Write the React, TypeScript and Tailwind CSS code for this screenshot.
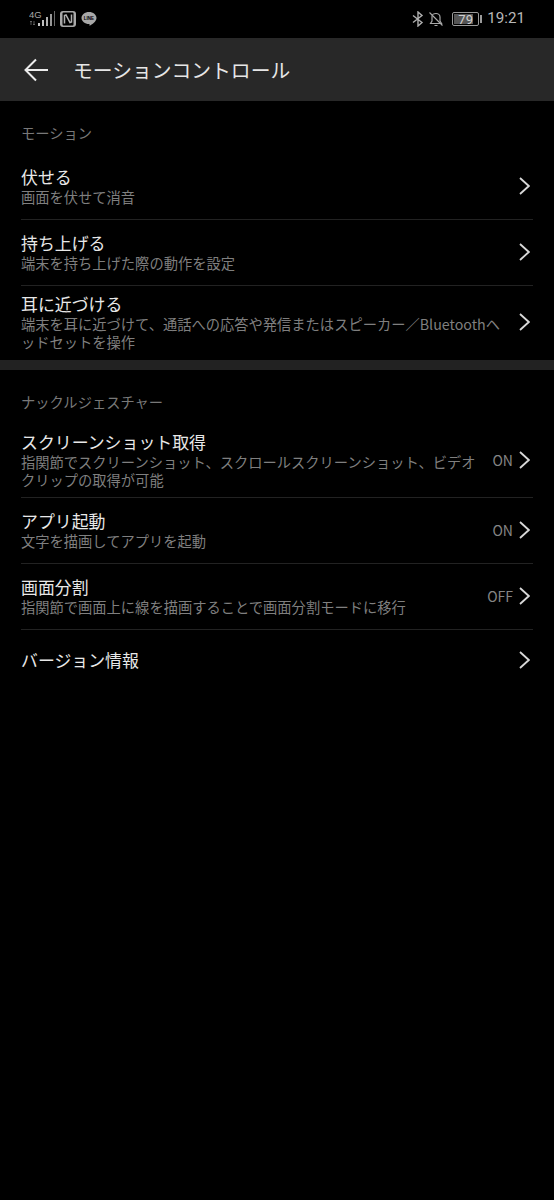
import React from 'react';

const font = '[font-family:"Noto_Sans_CJK_JP","Noto_Sans",sans-serif]';

const Chevron = () => (
  <svg width="12" height="20" viewBox="0 0 12 20" fill="none" className="shrink-0">
    <path d="M2 2l8.800 8L2 18" stroke="#d8d8d8" strokeWidth="1.800" />
  </svg>
);

interface RowProps {
  title: string;
  sub?: string;
  value?: string;
  heightClass: string;
  divider?: boolean;
}

const Row: React.FC<RowProps> = ({ title, sub, value, heightClass, divider = true }) => (
  <div className={`flex items-center pb-[2px] pr-[3px] ${heightClass} ${divider ? 'border-b border-[#222222]' : ''}`}>
    <div className="min-w-0 flex-1">
      <div className="text-[16.9px] leading-[22px] text-[#e8e8e8]">{title}</div>
      {sub && <div className="text-[14.27px] leading-[18px] text-[#7f7f7f] [line-break:loose]">{sub}</div>}
    </div>
    {value && <span className="ml-3 pt-[2px] text-[14px] text-[#858585]">{value}</span>}
    <div className={value ? 'ml-[5px]' : 'ml-[7px]'}><Chevron /></div>
  </div>
);

export default function App() {
  return (
    <div className={`h-[1200px] w-[554px] bg-black ${font}`}>
      {/* status bar */}
      <div className="flex h-[38px] items-center justify-between pl-[29px] pr-[29px] text-[#b0b0b0]">
        <div className="flex items-center gap-[5px]">
          <svg width="26" height="18" viewBox="0 0 26 18">
            <text x="0" y="8" fontSize="9.500" fill="#a8a8a8" fontFamily="Liberation Sans">4G</text>
            <path d="M2 11v4M1 12l1-1 1 1M5 11v4M4 14l1 1 1-1" stroke="#707070" strokeWidth="0.800" fill="none" />
            <rect x="9" y="13" width="2" height="3" fill="#c8c8c8" />
            <rect x="13" y="10" width="2" height="6" fill="#c0c0c0" />
            <rect x="17" y="7" width="2" height="9" fill="#b0b0b0" />
            <rect x="21" y="4" width="2" height="12" fill="#989898" />
            <rect x="25" y="1" width="1" height="15" fill="#686868" />
          </svg>
          <svg width="16" height="16" viewBox="0 0 16 16" fill="none">
            <rect x="0" y="0" width="16" height="16" rx="3" fill="#a8a8a8" />
            <rect x="2.500" y="1.500" width="11" height="13" rx="1" fill="#000" />
            <path d="M4.500 12.500V4.500l1.500-.5 4 7.500 1.500-.5V3.500" stroke="#b0b0b0" strokeWidth="1.500" />
          </svg>
          <svg width="16" height="16" viewBox="0 0 16 16">
            <path d="M8 1c4.200 0 7.500 2.700 7.500 6 0 3.500-4.500 6.500-7 8 .3-1 .3-2-.5-2C4 13 .5 10.300.5 7 .5 3.700 3.800 1 8 1z" fill="#a8a8a8" />
            <text x="8" y="9" fontSize="4.500" textAnchor="middle" fontWeight="700" fill="#000" fontFamily="Liberation Sans">LINE</text>
          </svg>
        </div>
        <div className="flex items-center">
          <svg width="12" height="16" viewBox="0 0 12 16" fill="none" stroke="#b0b0b0" strokeWidth="1.400">
            <path d="M1 4.500l9 7L6 15V1l4 3.500-9 7" />
          </svg>
          <svg width="16" height="16" viewBox="0 0 16 16" fill="none" stroke="#a8a8a8" strokeWidth="1.200" className="ml-[4px]">
            <path d="M4 5.500C4 3.500 6 2.500 8 2.500s4 1.300 4 3.500v4l1.500 2.500h-11L4 10z" />
            <path d="M6.500 14.500h3M1.500 1.500l13 13" />
          </svg>
          <div className="ml-[8px] flex items-center">
            <div className="relative h-[14px] w-[27px] rounded-[2px] border border-[#9a9a9a]">
              <div className="absolute inset-y-[1px] left-[1px] w-[19px] bg-[#555555]" />
              <span className="absolute inset-0 flex items-center justify-center text-[13px] leading-none text-[#d0d0d0] [font-family:'Roboto',sans-serif]">79</span>
            </div>
            <div className="ml-[1px] h-[8px] w-[2px] bg-[#9a9a9a]" />
          </div>
          <span className="ml-[5px] text-[15.2px] leading-none text-[#b8b8b8] [font-family:'Roboto',sans-serif]">19:21</span>
        </div>
      </div>

      {/* header */}
      <div className="flex h-[63px] items-center bg-[#282828] pl-[24px]">
        <svg width="25" height="24" viewBox="0 0 25 24" fill="none" stroke="#ececec" strokeWidth="2">
          <path d="M24 12H2M12 1.500L1.500 12 12 22.500" />
        </svg>
        <span className="ml-[24px] text-[19.8px] text-[#e6e6e6]">モーションコントロール</span>
      </div>

      {/* motion */}
      <div className="px-[21px]">
        <div className="flex h-[54px] items-end pb-[13px] text-[14.27px] leading-[18px] text-[#787878]">モーション</div>
        <Row heightClass="h-[65px]" title="伏せる" sub="画面を伏せて消音" />
        <Row heightClass="h-[66px]" title="持ち上げる" sub="端末を持ち上げた際の動作を設定" />
        <Row
          heightClass="h-[74px]"
          title="耳に近づける"
          sub="端末を耳に近づけて、通話への応答や発信またはスピーカー／Bluetoothヘッドセットを操作"
          divider={false}
        />
      </div>

      <div className="h-[10px] bg-[#222222]" />

      {/* knuckle */}
      <div className="px-[21px]">
        <div className="flex h-[54px] items-end pb-[13px] text-[14.27px] leading-[18px] text-[#787878]">ナックルジェスチャー</div>
        <Row
          heightClass="h-[74px]"
          title="スクリーンショット取得"
          sub="指関節でスクリーンショット、スクロールスクリーンショット、ビデオクリップの取得が可能"
          value="ON"
        />
        <Row heightClass="h-[66px]" title="アプリ起動" sub="文字を描画してアプリを起動" value="ON" />
        <Row heightClass="h-[66px]" title="画面分割" sub="指関節で画面上に線を描画することで画面分割モードに移行" value="OFF" />
        <Row heightClass="h-[62px]" title="バージョン情報" divider={false} />
      </div>
    </div>
  );
}
